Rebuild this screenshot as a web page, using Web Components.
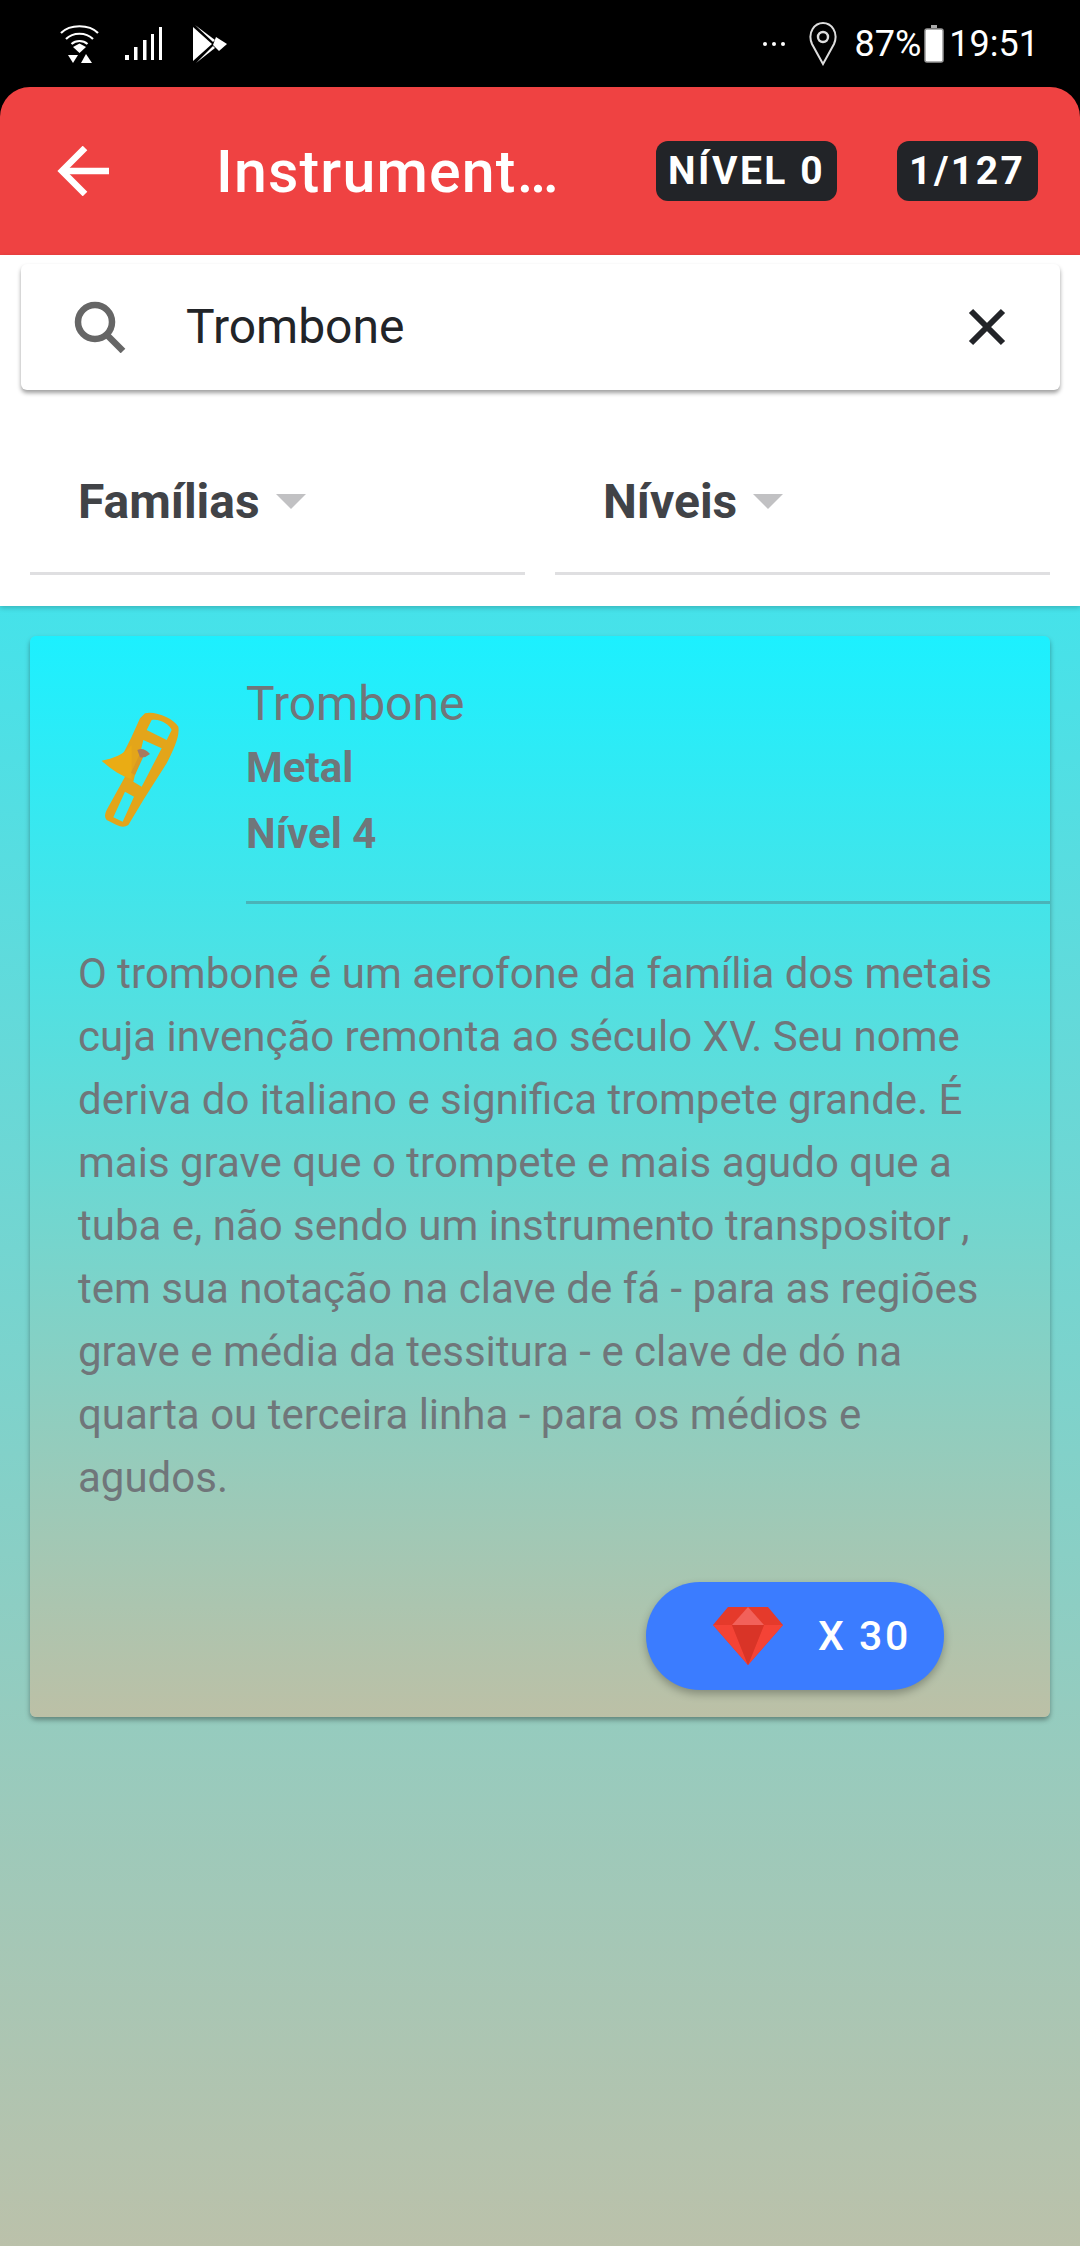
<!DOCTYPE html>
<html lang="pt">
<head>
<meta charset="utf-8">
<title>Instrumentos</title>
<style>
html, body { margin: 0; padding: 0; }
body {
  width: 1080px;
  height: 2246px;
  overflow: hidden;
  display: flex;
  flex-direction: column;
  background: #000;
  font-family: Roboto, "Liberation Sans", sans-serif;
}
</style>
</head>
<body>
<status-bar></status-bar>
<app-bar level="NÍVEL 0" count="1/127">Instrument…</app-bar>
<search-panel>
  <search-box>Trombone</search-box>
  <filter-row>
    <filter-select>Famílias</filter-select>
    <filter-select>Níveis</filter-select>
  </filter-row>
</search-panel>
<card-list>
  <instrument-card name="Trombone" family="Metal" level="Nível 4" reward="X 30">O trombone é um aerofone da família dos metais cuja invenção remonta ao século XV. Seu nome deriva do italiano e significa trompete grande. É mais grave que o trompete e mais agudo que a tuba e, não sendo um instrumento transpositor , tem sua notação na clave de fá - para as regiões grave e média da tessitura - e clave de dó na quarta ou terceira linha - para os médios e agudos.</instrument-card>
</card-list>

<script>
class StatusBar extends HTMLElement {
  constructor() {
    super();
    this.attachShadow({ mode: "open" }).innerHTML = `
<style>
:host {
  display: flex;
  align-items: center;
  height: 87px;
  flex: none;
  box-sizing: border-box;
  padding: 0 41px 0 60px;
  background: #000;
  color: #fff;
  font-size: 36px;
}
svg { display: block; flex: none; }
.spacer { flex: 1; }
.pct { margin-left: 17px; }
.time { margin-left: 5px; }
</style>
<!-- wifi -->
<svg width="40" height="42" viewBox="0 0 40 42" fill="none" stroke="#fff" stroke-width="2.2">
  <path d="M1 10 C10 1 29 1 38 10"/>
  <path d="M6 16 C13 9 26 9 33 16"/>
  <path d="M11.5 21 C16 17 23 17 27.5 21"/>
  <path d="M13 24 L19.5 20.5 L26 24 L19.5 30 Z" fill="#fff" stroke="none"/>
  <path d="M8 32 H18 L13 40 Z" fill="#fff" stroke="none"/>
  <path d="M26 31 L32 40 H21 Z" fill="#fff" stroke="none"/>
</svg>
<!-- signal -->
<svg style="margin-left:25px" width="38" height="36" viewBox="0 0 38 36" fill="#fff">
  <rect x="0" y="29" width="4" height="5"/>
  <rect x="9" y="21" width="3.5" height="13"/>
  <rect x="18" y="14" width="3.5" height="20"/>
  <rect x="26" y="8" width="3" height="26"/>
  <rect x="34" y="1" width="3" height="33"/>
</svg>
<!-- play store -->
<svg style="margin-left:30px" width="35" height="38" viewBox="0 0 35 38" fill="#fff">
  <path d="M0 2 L19 19 L0 36 Z"/>
  <path d="M2 0 L22 15 L20 17 Z"/>
  <path d="M3 38 L22 23 L20 21 Z"/>
  <path d="M23 12 L34 19 L26 26 L20 20 Z"/>
</svg>
<span class="spacer"></span>
<svg width="24" height="6" viewBox="0 0 24 6" fill="#fff">
  <circle cx="3" cy="3" r="2"/><circle cx="12" cy="3" r="2"/><circle cx="21" cy="3" r="2"/>
</svg>
<svg style="margin-left:22px" width="30" height="44" viewBox="0 0 30 44" fill="none" stroke="#ddd" stroke-width="2">
  <path d="M15 42 L4 22 C-1 10 7 1 15 1 C23 1 31 10 26 22 Z"/>
  <circle cx="15" cy="15" r="5" stroke-width="2.4"/>
</svg>
<span class="pct">87%</span>
<svg style="margin-left:3px" width="20" height="38" viewBox="0 0 20 38">
  <rect x="7" y="0" width="6" height="3" fill="#aaa"/>
  <rect x="1" y="4" width="18" height="33" rx="2" fill="#fff" stroke="#999" stroke-width="1.5"/>
</svg>
<span class="time">19:51</span>`;
  }
}

class AppBar extends HTMLElement {
  constructor() {
    super();
    this.attachShadow({ mode: "open" }).innerHTML = `
<style>
:host {
  display: flex;
  align-items: center;
  flex: none;
  height: 168px;
  box-sizing: border-box;
  padding: 0 42px 0 57px;
  background: #ef4242;
  border-radius: 30px 30px 0 0;
  color: #fff;
}
svg { display: block; flex: none; }
.title {
  margin-left: 107px;
  width: 342px;
  flex: none;
  white-space: nowrap;
  font-size: 59px;
  letter-spacing: 1.2px;
  font-weight: 500;
}
.chip {
  flex: none;
  height: 60px;
  line-height: 60px;
  box-sizing: border-box;
  padding: 0 12px;
  border-radius: 12px;
  background: #222428;
  font-size: 39px;
  font-weight: 700;
  letter-spacing: 2.5px;
}
#level { margin-left: 98px; }
#count { margin-left: 60px; }
</style>
<svg width="52" height="50" viewBox="0 0 52 50" fill="none" stroke="#fff" stroke-width="6.5">
  <path d="M52 25 H4"/>
  <path d="M28 2 L5 25 L28 48"/>
</svg>
<span class="title"><slot></slot></span>
<span class="chip" id="level"></span>
<span class="chip" id="count"></span>`;
  }

  connectedCallback() {
    this.shadowRoot.getElementById("level").textContent = this.getAttribute("level");
    this.shadowRoot.getElementById("count").textContent = this.getAttribute("count");
  }
}

class SearchPanel extends HTMLElement {
  constructor() {
    super();
    this.attachShadow({ mode: "open" }).innerHTML = `
<style>
:host {
  display: block;
  flex: none;
  height: 351px;
  box-sizing: border-box;
  padding: 9px 20px 0 21px;
  background: #fff;
  position: relative;
  z-index: 1;
  box-shadow: 0 2px 5px rgba(0,0,0,.2);
}
</style>
<slot></slot>`;
  }
}

class SearchBox extends HTMLElement {
  constructor() {
    super();
    this.attachShadow({ mode: "open" }).innerHTML = `
<style>
:host {
  display: flex;
  align-items: center;
  height: 126px;
  box-sizing: border-box;
  padding: 0 54px 0 53px;
  background: #fff;
  border-radius: 6px;
  box-shadow: 0 3px 4px rgba(0,0,0,.38);
  color: #222428;
  font-size: 48px;
}
svg { display: block; flex: none; }
.text { margin-left: 60px; flex: 1; padding-bottom: 2px; }
</style>
<svg width="52" height="52" viewBox="0 0 52 52" fill="none" stroke="#666" stroke-width="6.5">
  <circle cx="21" cy="21" r="17"/>
  <path d="M32 33 L49 50"/>
</svg>
<span class="text"><slot></slot></span>
<svg width="38" height="38" viewBox="0 0 38 38" fill="none" stroke="#222428" stroke-width="6">
  <path d="M3 3 L35 35 M35 3 L3 35"/>
</svg>`;
  }
}

class FilterRow extends HTMLElement {
  constructor() {
    super();
    this.attachShadow({ mode: "open" }).innerHTML = `
<style>
:host {
  display: grid;
  grid-template-columns: 495px 495px;
  justify-content: space-between;
  margin: 0 10px 0 9px;
}
</style>
<slot></slot>`;
  }
}

class FilterSelect extends HTMLElement {
  constructor() {
    super();
    this.attachShadow({ mode: "open" }).innerHTML = `
<style>
:host {
  display: flex;
  align-items: center;
  gap: 16px;
  height: 185px;
  box-sizing: border-box;
  padding: 40px 0 0 48px;
  border-bottom: 3px solid #dfdfe1;
  color: #414347;
  font-size: 48px;
  font-weight: 700;
}
.arrow {
  width: 0;
  height: 0;
  border-left: 15px solid transparent;
  border-right: 15px solid transparent;
  border-top: 15px solid #c1c1c3;
}
</style>
<span><slot></slot></span>
<span class="arrow"></span>`;
  }
}

class CardList extends HTMLElement {
  constructor() {
    super();
    this.attachShadow({ mode: "open" }).innerHTML = `
<style>
:host {
  display: block;
  flex: 1;
  box-sizing: border-box;
  padding: 30px 30px 0;
  background: linear-gradient(180deg, #45e2ea 0%, #bbc1aa 100%);
}
</style>
<slot></slot>`;
  }
}

class GemButton extends HTMLElement {
  constructor() {
    super();
    this.attachShadow({ mode: "open" }).innerHTML = `
<style>
:host {
  display: flex;
  align-items: center;
  width: 298px;
  height: 108px;
  box-sizing: border-box;
  padding: 0 0 0 67px;
  background: #3b7cff;
  border-radius: 54px;
  box-shadow: 0 4px 8px rgba(0,0,0,.28);
  color: #fff;
  font-size: 41px;
  font-weight: 500;
  letter-spacing: 2.5px;
}
svg { display: block; flex: none; }
span { margin-left: 35px; }
</style>
<svg width="70" height="58" viewBox="0 0 70 58">
  <path d="M15 0 H55 L70 18 L35 58 L0 18 Z" fill="#e53a2b"/>
  <path d="M0 18 H19 L35 58 Z" fill="#f44336"/>
  <path d="M70 18 H51 L35 58 Z" fill="#f44336"/>
  <path d="M19 18 H51 L35 58 Z" fill="#d93427"/>
  <path d="M35 0 L51 18 H19 Z" fill="#f2615a"/>
</svg>
<span><slot></slot></span>`;
  }
}
customElements.define("gem-button", GemButton);

class InstrumentCard extends HTMLElement {
  constructor() {
    super();
    this.attachShadow({ mode: "open" }).innerHTML = `
<style>
:host {
  display: block;
  height: 1081px;
  box-sizing: border-box;
  background: linear-gradient(180deg, #1cf0ff 0%, #bcc0a6 100%);
  border-radius: 6px;
  box-shadow: 0 3px 5px rgba(0,0,0,.35);
  color: #70767a;
}
.head {
  display: flex;
  height: 268px;
  box-sizing: border-box;
  padding-top: 43px;
}
.pic { width: 216px; flex: none; padding: 1px 0 0 30px; box-sizing: border-box; }
svg { display: block; }
.info {
  flex: 1;
  border-bottom: 3px solid rgba(80,130,135,.5);
}
.name { font-size: 48px; line-height: 50px; }
.sub { font-size: 42px; line-height: 66px; font-weight: 700; }
.sub.first { margin-top: 6px; }
.desc {
  margin: 0;
  padding: 38px 30px 0 48px;
  font-size: 42px;
  line-height: 63px;
}
.foot { display: flex; justify-content: flex-end; padding: 73px 106px 0 0; }
</style>
<div class="head">
  <div class="pic">
    <!-- trombone, drawn in 3x coordinates -->
    <svg width="160" height="170" viewBox="0 0 480 510">
      <path fill-rule="evenodd" fill="#e3a51a" d="M255 100 C285 92 340 115 355 140 C360 170 340 210 320 250 L250 360 L205 435 Q190 445 170 435 L140 420 Q130 410 140 390 L195 290 L180 240 L215 170 L240 115 Z M275 120 C300 115 330 135 335 150 L320 180 L260 150 Z M250 180 L305 205 L245 320 L220 305 Z M195 335 L222 350 L188 425 L160 412 Z"/>
      <path fill="#eaac14" d="M215 195 C190 225 160 235 125 242 C150 265 185 290 215 297 Z"/>
      <path fill="#d99a22" d="M238 225 L250 230 L225 285 L213 278 Z"/>
      <path fill="#a87a5e" d="M232 210 Q250 200 270 222 Q255 235 240 232 Z"/>
    </svg>
  </div>
  <div class="info">
    <div class="name"></div>
    <div class="sub first" id="family"></div>
    <div class="sub" id="level"></div>
  </div>
</div>
<p class="desc"><slot></slot></p>
<div class="foot"><gem-button></gem-button></div>`;
  }

  connectedCallback() {
    const root = this.shadowRoot;
    root.querySelector(".name").textContent = this.getAttribute("name");
    root.getElementById("family").textContent = this.getAttribute("family");
    root.getElementById("level").textContent = this.getAttribute("level");
    root.querySelector("gem-button").textContent = this.getAttribute("reward");
  }
}

customElements.define("status-bar", StatusBar);
customElements.define("app-bar", AppBar);
customElements.define("search-panel", SearchPanel);
customElements.define("search-box", SearchBox);
customElements.define("filter-row", FilterRow);
customElements.define("filter-select", FilterSelect);
customElements.define("card-list", CardList);
customElements.define("instrument-card", InstrumentCard);
</script>
</body>
</html>
